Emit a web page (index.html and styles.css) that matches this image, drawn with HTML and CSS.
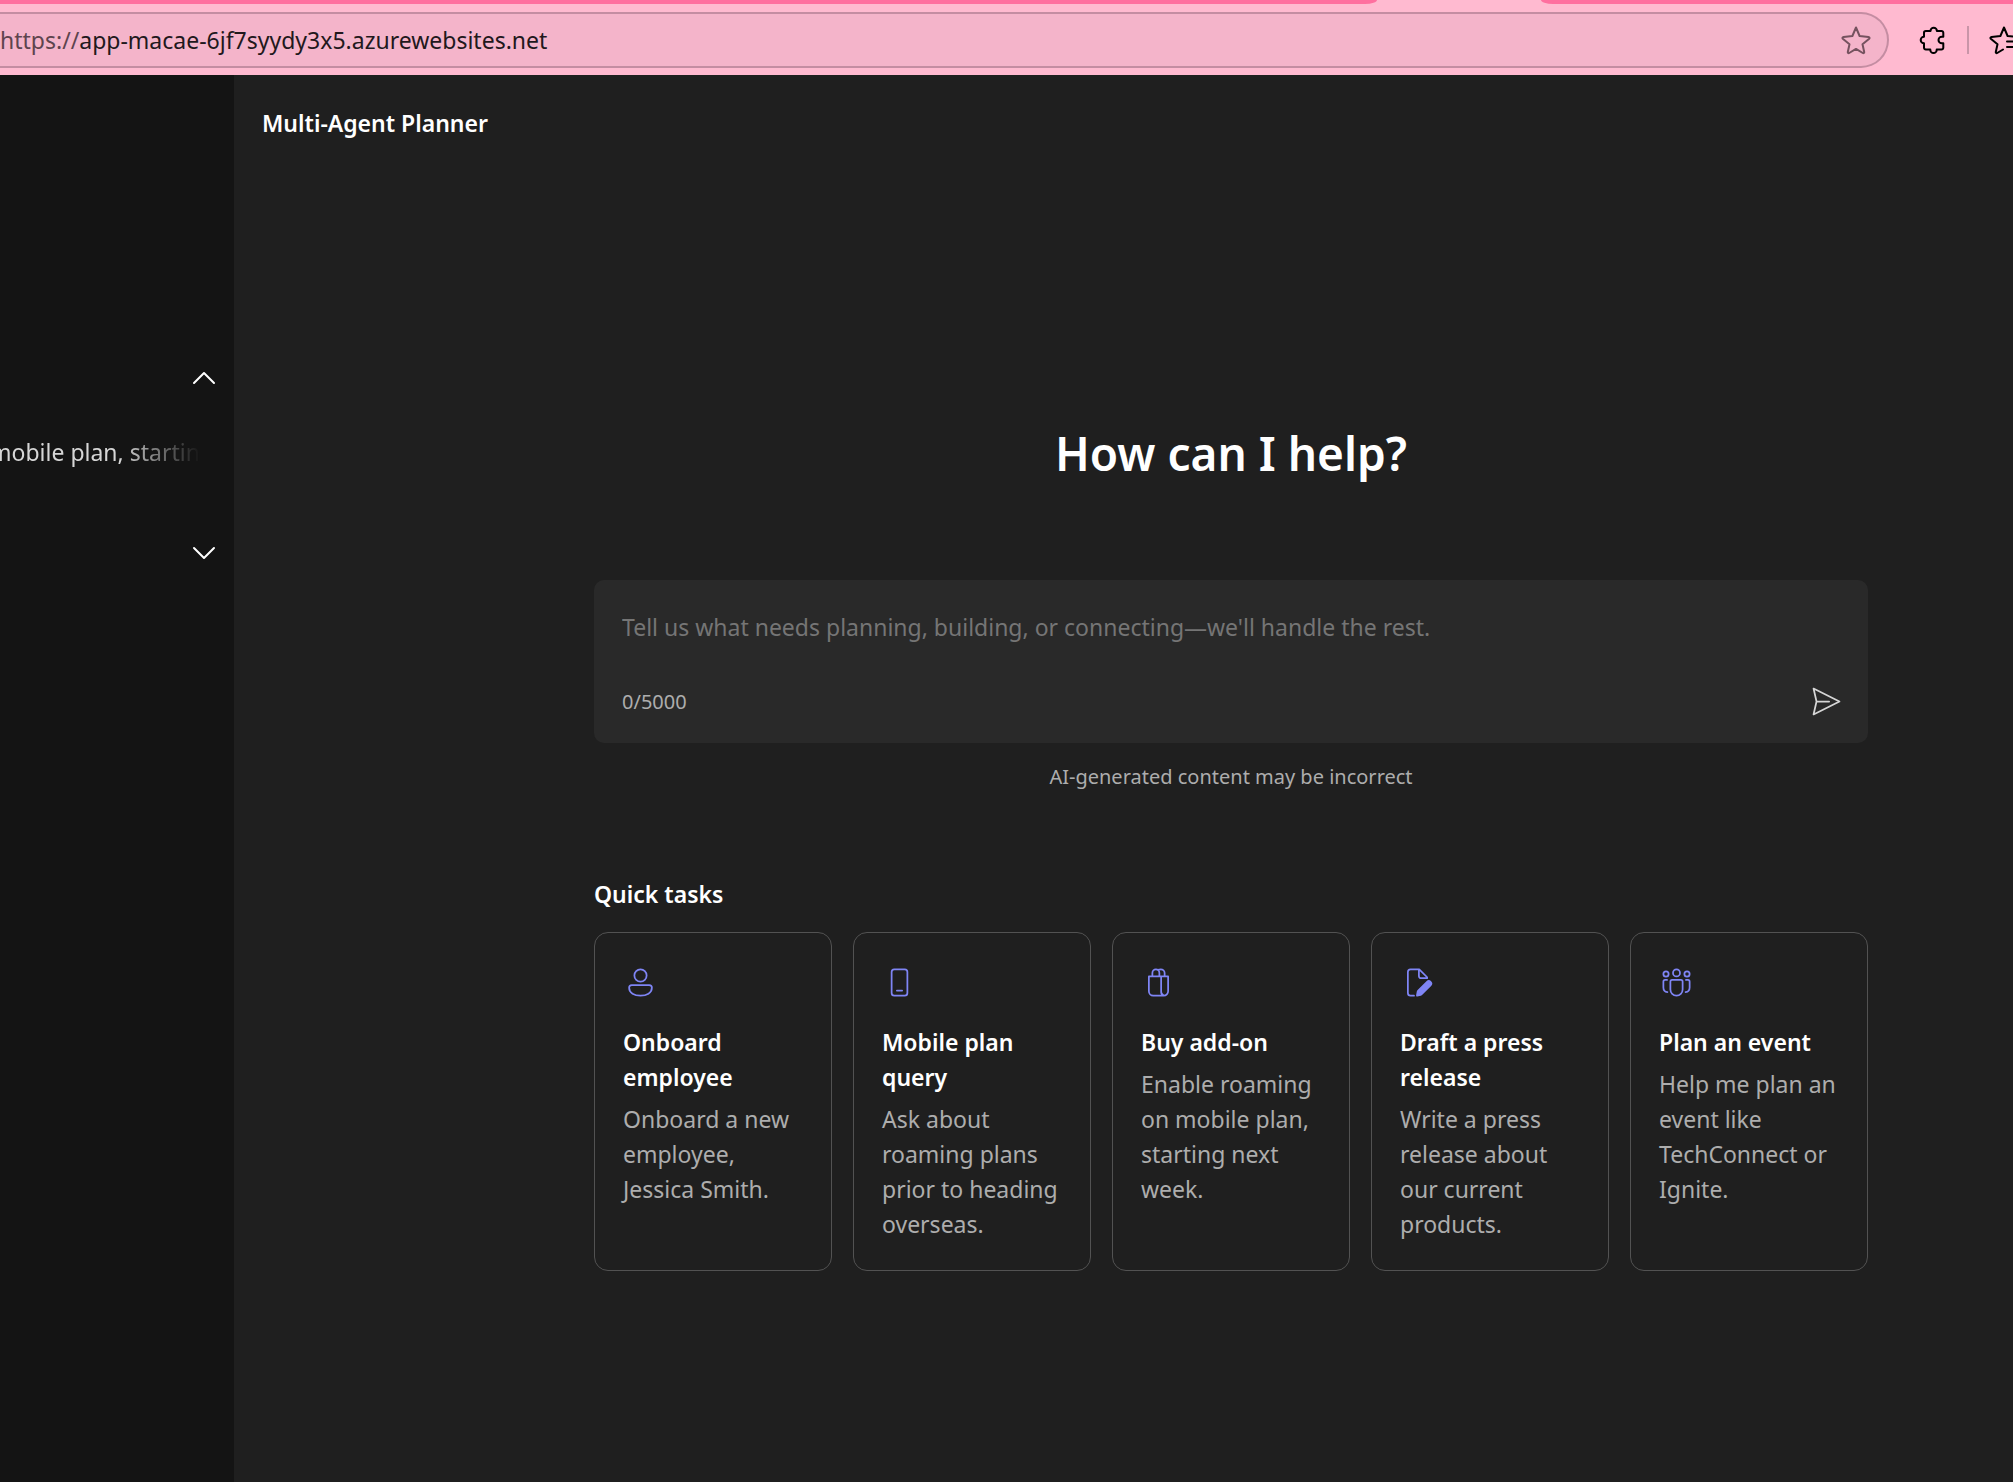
FILE: index.html
```html
<!DOCTYPE html>
<html lang="en">
<head>
<meta charset="utf-8">
<meta name="viewport" content="width=device-width, initial-scale=1">
<title>Multi-Agent Planner</title>
<link rel="stylesheet" href="styles.css">
</head>
<body>
<div class="browser">
  <div class="tab-strip">
    <div class="tabs-before"></div>
    <div class="tabs-after"></div>
  </div>
  <div class="toolbar">
    <div class="address">
      <div class="url"><span class="scheme">https://</span>app-macae-6jf7syydy3x5.azurewebsites.net</div>
      <button class="icon-button favorite" type="button" aria-label="Add to favorites">
        <svg viewBox="0 0 32 32" width="32" height="32"><path d="M16 3.500 19.600 12l8.900.9c1 .1 1.400 1.100.7 1.800L22.500 20.200l1.700 7.800c.2.900-.6 1.500-1.400 1L16 24.900 9.200 29c-.8.500-1.600-.1-1.400-1l1.700-7.800L2.800 14.700c-.7-.7-.3-1.700.7-1.800l8.900-.9Z"/></svg>
      </button>
    </div>
    <button class="icon-button extensions" type="button" aria-label="Extensions">
      <svg viewBox="0 0 32 32" width="32" height="32"><path d="M13.500 7a3.200 3.200 0 0 1 6.400 0h4.600a1.800 1.800 0 0 1 1.800 1.800v3.900h-1.500a3.300 3.300 0 0 0 0 6.600h1.500v4.400a1.800 1.800 0 0 1-1.800 1.800h-4.800v.4a3.200 3.200 0 0 1-6.400 0v-.4H8.800A1.800 1.800 0 0 1 7 23.700v-4.400a3.300 3.300 0 0 1 0-6.600V8.800A1.800 1.800 0 0 1 8.800 7Z"/></svg>
    </button>
    <span class="divider"></span>
    <button class="icon-button favorites-list" type="button" aria-label="Favorites">
      <svg viewBox="0 0 32 32" width="32" height="32"><path d="M29 12.900 19.600 12 16 3.500 12.400 12l-8.900.9c-1 .1-1.400 1.100-.7 1.800l6.700 5.500L7.800 28c-.2.900.6 1.500 1.400 1l5.800-3.500M19 17.500h12M19 23h12"/></svg>
    </button>
  </div>
</div>
<div class="app">
  <aside class="sidebar">
    <button class="icon-button section-toggle" type="button" aria-label="Collapse section">
      <svg viewBox="0 0 24 24" width="24" height="24"><path d="M2 17 12 7l10 10"/></svg>
    </button>
    <a class="history-item" href="#">mobile plan, starting</a>
    <button class="icon-button section-toggle" type="button" aria-label="Expand section">
      <svg viewBox="0 0 24 24" width="24" height="24"><path d="M2 7l10 10L22 7"/></svg>
    </button>
  </aside>
  <main class="main">
    <header class="header">Multi-Agent Planner</header>
    <div class="home">
      <h1 class="greeting">How can I help?</h1>
      <form class="composer">
        <textarea class="prompt" rows="1" maxlength="5000" aria-label="Task description" placeholder="Tell us what needs planning, building, or connecting—we'll handle the rest."></textarea>
        <div class="composer-footer">
          <span class="small-text">0/5000</span>
          <button class="icon-button send" type="button" aria-label="Send">
            <svg viewBox="0 0 20 20" width="35" height="35"><path d="m2.600 2.600 14.800 7.400-14.800 7.400L4.300 10ZM4.300 10h7.200"/></svg>
          </button>
        </div>
      </form>
      <p class="small-text disclaimer">AI-generated content may be incorrect</p>
      <h2 class="section-title">Quick tasks</h2>
      <div class="tasks">
        <button class="task" type="button">
          <span class="task-icon"><svg viewBox="0 0 20 20" width="35" height="35"><circle cx="10" cy="6" r="3.500"/><path d="M5 11.500h10a1.500 1.500 0 0 1 1.500 1.500c0 3-3 4.500-6.500 4.500S3.500 16 3.500 13A1.500 1.500 0 0 1 5 11.500Z"/></svg></span>
          <span class="task-title">Onboard employee</span>
          <span class="task-text">Onboard a new employee, Jessica Smith.</span>
        </button>
        <button class="task" type="button">
          <span class="task-icon"><svg viewBox="0 0 20 20" width="35" height="35"><rect x="5.500" y="2.500" width="9" height="15" rx="1.500"/><path d="M8.500 14.600h3"/></svg></span>
          <span class="task-title">Mobile plan query</span>
          <span class="task-text">Ask about roaming plans prior to heading overseas.</span>
        </button>
        <button class="task" type="button">
          <span class="task-icon"><svg viewBox="0 0 20 20" width="35" height="35"><path d="M4.500 6.500h11V15a2.500 2.500 0 0 1-2.500 2.500H7A2.500 2.500 0 0 1 4.500 15ZM11.500 6.500V15a2.500 2.500 0 0 0 1.500 2.500M6.500 6.500v-2a2 2 0 0 1 4 0v2M9.800 2.800c.4-.2.800-.3 1.500-.3a2.200 2 0 0 1 2.200 2v2"/></svg></span>
          <span class="task-title">Buy add-on</span>
          <span class="task-text">Enable roaming on mobile plan, starting next week.</span>
        </button>
        <button class="task" type="button">
          <span class="task-icon"><svg viewBox="0 0 20 20" width="35" height="35"><path d="M8 17.500H6A1.500 1.500 0 0 1 4.500 16V4A1.500 1.500 0 0 1 6 2.500h5l4.500 4.500v.5H12a1.200 1.200 0 0 1-1.200-1.200V2.500"/><path class="solid" d="m10.200 14.200 4.900-4.900a1.900 1.900 0 0 1 2.700 2.700l-4.900 4.900c-.3.300-.6.500-1 .6l-2 .5a.6.600 0 0 1-.7-.7l.4-2.100c.1-.4.300-.7.600-1Z"/></svg></span>
          <span class="task-title">Draft a press release</span>
          <span class="task-text">Write a press release about our current products.</span>
        </button>
        <button class="task" type="button">
          <span class="task-icon"><svg viewBox="0 0 20 20" width="35" height="35"><circle cx="10" cy="4.500" r="2"/><circle cx="4" cy="5.100" r="1.500"/><circle cx="16" cy="5.100" r="1.500"/><path d="M7.500 8.500h5a1 1 0 0 1 1 1V14a3.500 3.500 0 0 1-7 0V9.500a1 1 0 0 1 1-1ZM4.600 8.500H3.500a1 1 0 0 0-1 1v3.300c0 1.500.9 2.500 2.300 2.700M15.400 8.500h1.100a1 1 0 0 1 1 1v3.300c0 1.500-.9 2.500-2.300 2.700"/></svg></span>
          <span class="task-title">Plan an event</span>
          <span class="task-text">Help me plan an event like TechConnect or Ignite.</span>
        </button>
      </div>
    </div>
  </main>
</div>
</body>
</html>
```
FILE: styles.css
```css
*, *::before, *::after { box-sizing: border-box; }

body {
  margin: 0;
  min-height: 100vh;
  display: flex;
  flex-direction: column;
  overflow-x: hidden;
  background: #1f1f1f;
  color: #fff;
  font: 400 23px/35px "Noto Sans", "Segoe UI", sans-serif;
}

button, textarea { font: inherit; color: inherit; }
h1, h2, p { margin: 0; }

svg {
  display: block;
  fill: none;
  stroke: currentColor;
  stroke-linecap: round;
  stroke-linejoin: round;
}

.icon-button {
  flex: none;
  padding: 0;
  border: 0;
  background: none;
  cursor: pointer;
}

/* Browser chrome */
.browser { background: #ffbad0; color: #000; }
.tab-strip { display: flex; justify-content: space-between; height: 4px; }
.tabs-before, .tabs-after { background: #ff6f9f; }
.tabs-before { width: 1377px; border-bottom-right-radius: 12px 4px; }
.tabs-after { width: 472px; border-bottom-left-radius: 12px 4px; }

.toolbar {
  display: flex;
  align-items: center;
  height: 71px;
  padding-top: 1px;
}

.address {
  flex: 1;
  display: flex;
  align-items: center;
  justify-content: space-between;
  height: 56px;
  padding-right: 15px;
  border: 2px solid #c48da2;
  border-left: 0;
  border-radius: 0 28px 28px 0;
  background: #f4b4ca;
  color: #22181c;
}
.scheme { color: #5e444e; }
.favorite { color: #75525f; }
.browser svg { stroke-width: 2; }
.extensions { margin-left: 28px; }
.divider { width: 2px; height: 28px; margin: 0 19px 0 18px; background: #c995a8; }
.favorites-list { width: 25px; overflow: hidden; }

/* App shell */
.app { flex: 1; display: flex; }
.sidebar {
  flex: none;
  width: 234px;
  padding: 291px 18px 0 0;
  display: flex;
  flex-direction: column;
  align-items: flex-end;
  background: #141414;
}
.section-toggle svg { stroke-width: 2; }
.history-item {
  align-self: stretch;
  margin: 45px 0 71px;
  overflow: hidden;
  color: #d6d6d6;
  text-decoration: none;
  text-indent: -10px;
  white-space: nowrap;
  -webkit-mask-image: linear-gradient(90deg, #000 120px, transparent 200px);
  mask-image: linear-gradient(90deg, #000 120px, transparent 200px);
}

.main { flex: 1; min-width: 0; }
.header { padding: 31px 28px; font-weight: 600; }

.home { padding: 249px 145px 40px 360px; }
.greeting {
  font-size: 46px;
  line-height: 64px;
  font-weight: 600;
  text-align: center;
}

/* Prompt box */
.composer {
  margin-top: 95px;
  padding: 30px 24px 24px 28px;
  border-radius: 10px;
  background: #292929;
}
.prompt {
  display: block;
  width: 100%;
  height: 35px;
  padding: 0;
  border: 0;
  outline: 0;
  resize: none;
  overflow: hidden;
  background: none;
}
.prompt::placeholder { color: #757575; opacity: 1; }
.composer-footer {
  display: flex;
  align-items: center;
  justify-content: space-between;
  margin-top: 39px;
}
.small-text { font-size: 20px; line-height: 28px; color: #adadad; }
.send { color: #d6d6d6; }
.disclaimer { margin-top: 20px; text-align: center; }

/* Quick tasks */
.section-title {
  margin: 86px 0 20px;
  font-size: 23px;
  line-height: 35px;
  font-weight: 600;
}
.tasks { display: grid; grid-template-columns: repeat(5, 1fr); gap: 21px; }
.task {
  display: flex;
  flex-direction: column;
  padding: 28px;
  border: 1px solid #525252;
  border-radius: 14px;
  background: none;
  text-align: left;
  cursor: pointer;
}
.task-icon { margin: 4px 0 25px; color: #7f85f5; }
.task-icon .solid { fill: currentColor; stroke: none; }
.task-title { font-weight: 600; }
.task-text { margin-top: 7px; color: #adadad; }
```
